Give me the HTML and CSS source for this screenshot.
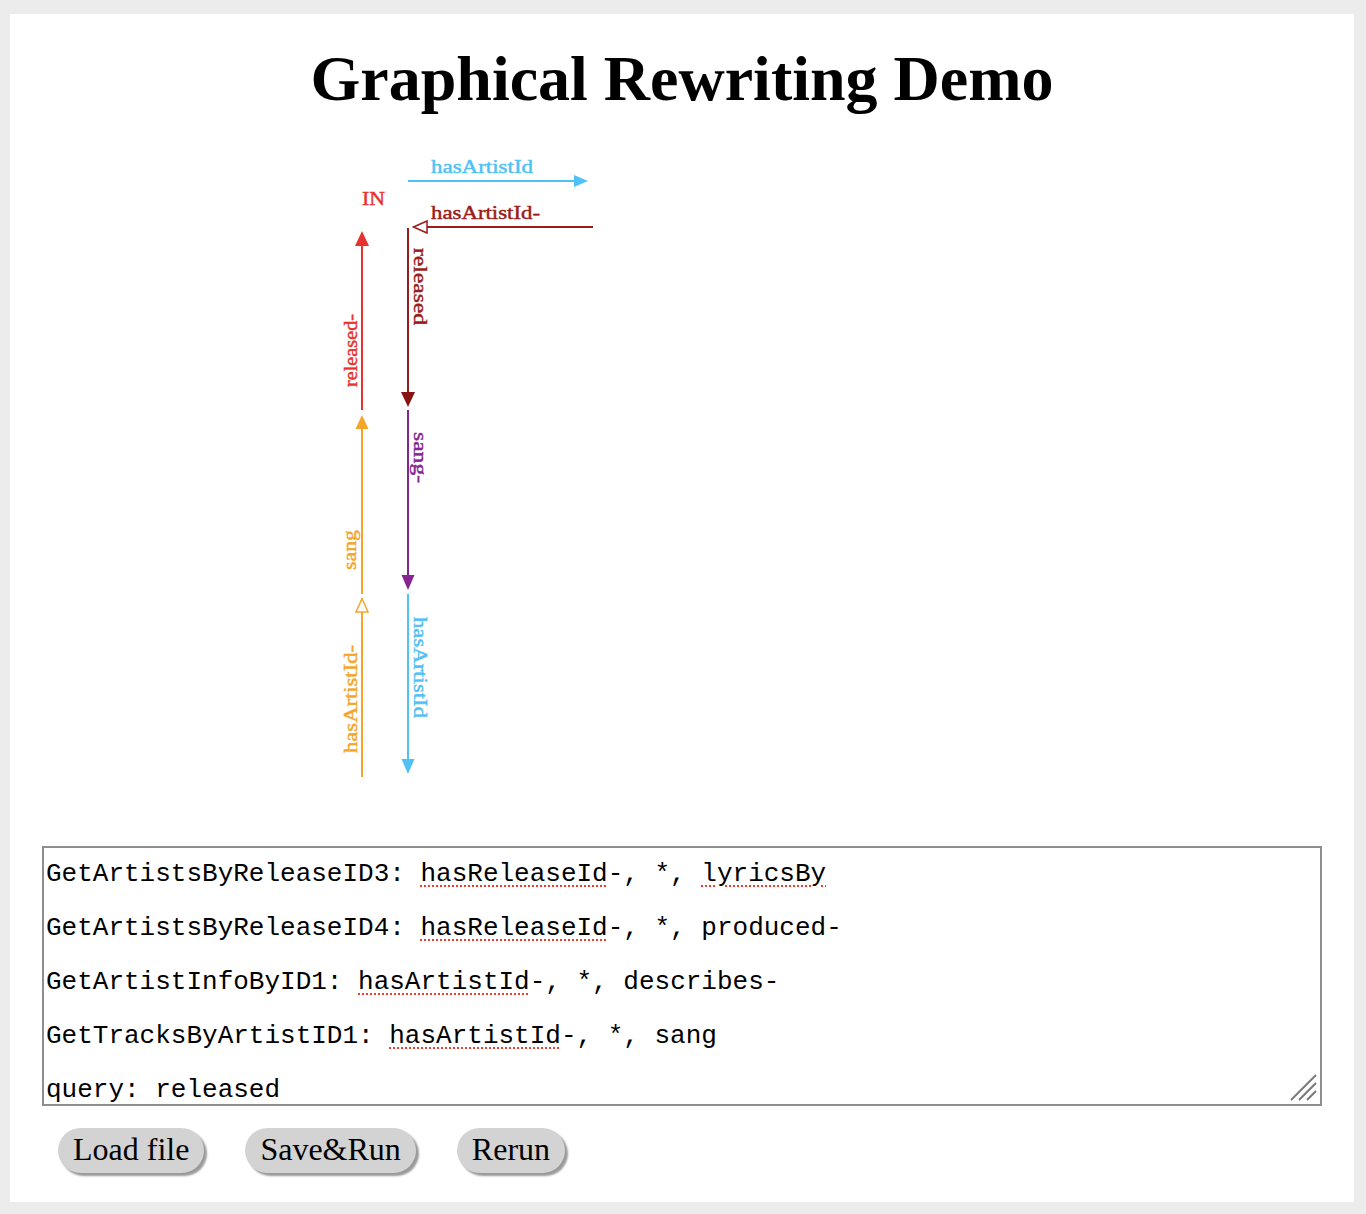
FILE: index.html
```html
<!DOCTYPE html>
<html lang="en">
<head>
<meta charset="utf-8">
<title>Graphical Rewriting Demo</title>
<link rel="stylesheet" href="styles.css">
</head>
<body>
<div class="page">
  <h1 class="title">Graphical Rewriting Demo</h1>
  <svg class="graph" width="1344" height="732" viewBox="10 114 1344 732" xmlns="http://www.w3.org/2000/svg">
    <g class="lbl">
      <!-- top blue -->
      <line x1="408" y1="181" x2="576" y2="181" stroke="#4fc1f5" stroke-width="2"/>
      <polygon points="588,181 574,175 574,187" fill="#4fc1f5"/>
      <text x="431" y="173" fill="#4fc1f5" stroke="#4fc1f5" textLength="102" lengthAdjust="spacingAndGlyphs">hasArtistId</text>

      <!-- IN -->
      <text x="362" y="205" fill="#e8322e" stroke="#e8322e" textLength="23" lengthAdjust="spacingAndGlyphs">IN</text>

      <!-- dark red horizontal -->
      <line x1="593" y1="227" x2="427" y2="227" stroke="#9a1b1b" stroke-width="2"/>
      <polygon points="413.5,227 427,221 427,233" fill="#fff" stroke="#9a1b1b" stroke-width="1.5"/>
      <text x="431" y="219" fill="#9a1b1b" stroke="#9a1b1b" textLength="109" lengthAdjust="spacingAndGlyphs">hasArtistId-</text>

      <!-- dark red vertical -->
      <line x1="408" y1="228" x2="408" y2="394" stroke="#9a1b1b" stroke-width="2"/>
      <polygon points="408,407 401,392 415,392" fill="#8a1414"/>
      <text transform="translate(414,248) rotate(90)" fill="#9a1b1b" stroke="#9a1b1b" textLength="77" lengthAdjust="spacingAndGlyphs">released</text>

      <!-- red vertical -->
      <line x1="362" y1="410" x2="362" y2="244" stroke="#e8322e" stroke-width="2"/>
      <polygon points="362,231 355,246 369,246" fill="#e8322e"/>
      <text transform="translate(357,387) rotate(-90)" fill="#e8322e" stroke="#e8322e" textLength="73" lengthAdjust="spacingAndGlyphs">released-</text>

      <!-- orange upper -->
      <line x1="362" y1="594" x2="362" y2="428" stroke="#f4a62a" stroke-width="2"/>
      <polygon points="362,415 355.5,429 368.5,429" fill="#f4a62a"/>
      <text transform="translate(356,570) rotate(-90)" fill="#f4a62a" stroke="#f4a62a" textLength="40" lengthAdjust="spacingAndGlyphs">sang</text>

      <!-- purple -->
      <line x1="408" y1="410" x2="408" y2="576" stroke="#862590" stroke-width="2"/>
      <polygon points="408,590 401.5,575 414.5,575" fill="#862590"/>
      <text transform="translate(414,432) rotate(90)" fill="#862590" stroke="#862590" textLength="51" lengthAdjust="spacingAndGlyphs">sang-</text>

      <!-- orange lower -->
      <line x1="362" y1="777" x2="362" y2="612" stroke="#f4a62a" stroke-width="2"/>
      <polygon points="362,598.5 356,612 368,612" fill="#fff" stroke="#f4a62a" stroke-width="1.5"/>
      <text transform="translate(357,753) rotate(-90)" fill="#f4a62a" stroke="#f4a62a" textLength="108" lengthAdjust="spacingAndGlyphs">hasArtistId-</text>

      <!-- blue lower -->
      <line x1="408" y1="594" x2="408" y2="760" stroke="#4fc1f5" stroke-width="2"/>
      <polygon points="408,774 401.5,759 414.5,759" fill="#4fc1f5"/>
      <text transform="translate(414,617) rotate(90)" fill="#4fc1f5" stroke="#4fc1f5" textLength="101" lengthAdjust="spacingAndGlyphs">hasArtistId</text>
    </g>
  </svg>
  <div class="editor-wrap">
    <div class="editor">
      <div class="line">GetArtistsByReleaseID3: <span class="sp">hasReleaseId</span>-, *, <span class="sp">lyricsBy</span></div>
      <div class="line">GetArtistsByReleaseID4: <span class="sp">hasReleaseId</span>-, *, produced-</div>
      <div class="line">GetArtistInfoByID1: <span class="sp">hasArtistId</span>-, *, describes-</div>
      <div class="line">GetTracksByArtistID1: <span class="sp">hasArtistId</span>-, *, sang</div>
      <div class="line">query: released</div>
    </div>
    <svg class="grip" width="30" height="30" viewBox="0 0 30 30" xmlns="http://www.w3.org/2000/svg">
      <path d="M2 27 L27 2 M10 27 L27 10 M18 27 L27 18" stroke="#7a7a7a" stroke-width="2" fill="none"/>
    </svg>
  </div>
  <div class="buttons">
    <button class="btn">Load file</button>
    <button class="btn">Save&amp;Run</button>
    <button class="btn">Rerun</button>
  </div>
</div>
</body>
</html>
```
FILE: styles.css
```css
html, body {
  margin: 0;
}
body {
  background: #ececec;
  padding: 14px 12px 12px 10px;
  font-family: "Liberation Serif", "Times New Roman", serif;
}
.page {
  background: #ffffff;
  padding: 29px 0 29px 0;
}
.title {
  margin: 0;
  font-size: 64px;
  font-weight: bold;
  text-align: center;
  line-height: 71px;
  color: #000;
}
.graph {
  display: block;
}
.lbl text {
  font-family: "Liberation Serif", "Times New Roman", serif;
  font-size: 19px;
  stroke-width: 0.45px;
}
.editor-wrap {
  position: relative;
  margin-left: 32px;
  width: 1280px;
  height: 260px;
}
.editor {
  box-sizing: border-box;
  width: 100%;
  height: 100%;
  border: 2px solid #8e8e8e;
  padding: 13px 2px 0 2px;
  font-family: "Liberation Mono", "Courier New", monospace;
  font-size: 26px;
  color: #000;
  overflow: hidden;
}
.line {
  height: 27px;
  line-height: 27px;
  margin-bottom: 27px;
  white-space: pre;
}
.sp {
  text-decoration: underline dotted #f23a2f;
  text-decoration-thickness: 2px;
  text-underline-offset: 4px;
}
.grip {
  position: absolute;
  right: 3px;
  bottom: 3px;
}
.buttons {
  display: flex;
  gap: 41px;
  margin: 22px 0 0 48px;
}
.btn {
  font-family: "Liberation Serif", "Times New Roman", serif;
  font-size: 32px;
  line-height: 35px;
  padding: 4px 15px 6px;
  height: 45px;
  border: none;
  border-radius: 23px;
  background: #d3d3d3;
  color: #000;
  box-shadow: 3px 3px 2px #9a9a9a;
}
```
